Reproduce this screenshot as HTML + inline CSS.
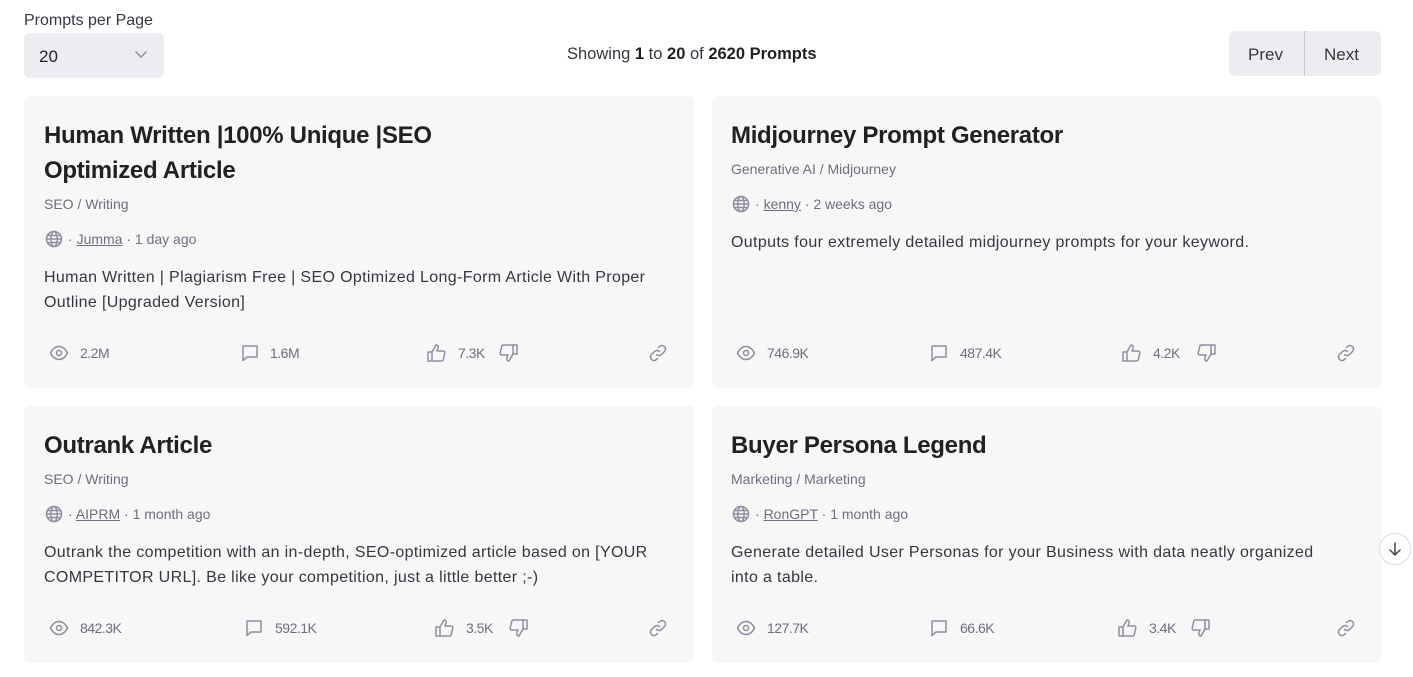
<!DOCTYPE html>
<html><head><meta charset="utf-8"><style>
*{margin:0;padding:0;box-sizing:border-box}
body{width:1413px;height:677px;background:#fff;font-family:"Liberation Sans",sans-serif;color:#202123;position:relative;overflow:hidden}
.a{position:absolute;white-space:nowrap}
.card{position:absolute;background:#f7f7f8;border-radius:6px}
.t{font-size:24px;font-weight:bold;letter-spacing:-0.3px;line-height:35px;color:#202123}
.c{font-size:14px;color:#6e6e80}
.m{font-size:14px;color:#6e6e80}
.m u{color:#6e6e80}
.d{font-size:16px;letter-spacing:0.35px;line-height:25px;color:#353740}
.s{font-size:14px;color:#6e6e80;letter-spacing:-0.5px}
svg{position:absolute;fill:none;stroke:#8e8ea0;stroke-width:1.5;stroke-linecap:round;stroke-linejoin:round}
</style></head><body>
<div class="a" style="left:24px;top:12px;font-size:16px;color:#353740">Prompts per Page</div>
<div class="a" style="left:24px;top:33px;width:140px;height:45px;background:#ececf1;border-radius:6px"></div>
<div class="a" style="left:39px;top:47px;font-size:17px">20</div>
<svg style="left:134px;top:49px" width="14" height="10" viewBox="0 0 14 10"><path d="M2 3l5 5 5-5"/></svg>
<div class="a" style="left:567px;top:45px;font-size:16.5px;color:#353740">Showing <b style="color:#202123">1</b> to <b style="color:#202123">20</b> of <b style="color:#202123">2620 Prompts</b></div>
<div class="a" style="left:1229px;top:31px;width:152px;height:45px;background:#ececf1;border-radius:6px"></div>
<div class="a" style="left:1304px;top:31px;width:1px;height:45px;background:#c5c5d2"></div>
<div class="a" style="left:1248px;top:45px;font-size:17px;color:#353740">Prev</div>
<div class="a" style="left:1324px;top:45px;font-size:17px;color:#353740">Next</div>

<div class="card" style="left:24px;top:96px;width:670px;height:292px"></div>
<div class="card" style="left:712px;top:96px;width:669px;height:292px"></div>
<div class="card" style="left:24px;top:406px;width:670px;height:257px"></div>
<div class="card" style="left:712px;top:406px;width:669px;height:257px"></div>

<div class="a t" style="left:44px;top:118px">Human Written |100% Unique |SEO<br>Optimized Article</div>
<div class="a c" style="left:44px;top:196px">SEO / Writing</div>
<div class="a m" style="left:68px;top:231px">· <u>Jumma</u> · 1 day ago</div>
<div class="a d" style="left:44px;top:265px">Human Written | Plagiarism Free | SEO Optimized Long-Form Article With Proper<br>Outline [Upgraded Version]</div>

<div class="a t" style="left:731px;top:118px">Midjourney Prompt Generator</div>
<div class="a c" style="left:731px;top:161px">Generative AI / Midjourney</div>
<div class="a m" style="left:755px;top:196px">· <u>kenny</u> · 2 weeks ago</div>
<div class="a d" style="left:731px;top:230px">Outputs four extremely detailed midjourney prompts for your keyword.</div>

<div class="a t" style="left:44px;top:428px">Outrank Article</div>
<div class="a c" style="left:44px;top:471px">SEO / Writing</div>
<div class="a m" style="left:68px;top:506px">· <u>AIPRM</u> · 1 month ago</div>
<div class="a d" style="left:44px;top:540px">Outrank the competition with an in-depth, SEO-optimized article based on [YOUR<br>COMPETITOR URL]. Be like your competition, just a little better ;-)</div>

<div class="a t" style="left:731px;top:428px">Buyer Persona Legend</div>
<div class="a c" style="left:731px;top:471px">Marketing / Marketing</div>
<div class="a m" style="left:755px;top:506px">· <u>RonGPT</u> · 1 month ago</div>
<div class="a d" style="left:731px;top:540px">Generate detailed User Personas for your Business with data neatly organized<br>into a table.</div>

<svg style="left:45px;top:230px" width="18" height="18" viewBox="0 0 18 18"><circle cx="9" cy="9" r="7.5"/><ellipse cx="9" cy="9" rx="3.2" ry="7.5"/><path d="M1.5 9h15M2.5 5.5h13M2.5 12.5h13"/></svg>
<svg style="left:732px;top:195px" width="18" height="18" viewBox="0 0 18 18"><circle cx="9" cy="9" r="7.5"/><ellipse cx="9" cy="9" rx="3.2" ry="7.5"/><path d="M1.5 9h15M2.5 5.5h13M2.5 12.5h13"/></svg>
<svg style="left:45px;top:505px" width="18" height="18" viewBox="0 0 18 18"><circle cx="9" cy="9" r="7.5"/><ellipse cx="9" cy="9" rx="3.2" ry="7.5"/><path d="M1.5 9h15M2.5 5.5h13M2.5 12.5h13"/></svg>
<svg style="left:732px;top:505px" width="18" height="18" viewBox="0 0 18 18"><circle cx="9" cy="9" r="7.5"/><ellipse cx="9" cy="9" rx="3.2" ry="7.5"/><path d="M1.5 9h15M2.5 5.5h13M2.5 12.5h13"/></svg>

<svg style="left:49px;top:344px" width="20" height="18" viewBox="0 0 20 18"><path d="M1.5 9C4 4 7 2.5 10 2.5S16 4 18.5 9C16 14 13 15.5 10 15.5S4 14 1.5 9z"/><circle cx="10" cy="9" r="2.5"/></svg>
<div class="a s" style="left:80px;top:345px">2.2M</div>
<svg style="left:240px;top:343px" width="20" height="20" viewBox="0 0 20 20"><path d="M3 3h14v11H7l-4 3.5z"/></svg>
<div class="a s" style="left:270px;top:345px">1.6M</div>
<svg style="left:426px;top:342px" width="22" height="22" viewBox="0 0 22 22"><path d="M6 10v9H2v-9zM6 10l4-7c2 0 2.5 1.5 2 3.5L11 9h6c1.5 0 2 1 1.8 2l-1.5 6.5c-.2.9-1 1.5-2 1.5H6"/></svg>
<div class="a s" style="left:458px;top:345px">7.3K</div>
<svg style="left:497px;top:342px" width="22" height="22" viewBox="0 0 22 22"><path d="M16 12V3h4v9zM16 12l-4 7c-2 0-2.5-1.5-2-3.5L11 13H5c-1.5 0-2-1-1.8-2l1.5-6.5c.2-.9 1-1.5 2-1.5H16"/></svg>
<svg style="left:648px;top:343px" width="20" height="20" viewBox="0 0 20 20"><path d="M8.5 11.5a3.5 3.5 0 0 0 5 0l3-3a3.5 3.5 0 0 0-5-5l-1 1M11.5 8.5a3.5 3.5 0 0 0-5 0l-3 3a3.5 3.5 0 0 0 5 5l1-1"/></svg>

<svg style="left:736px;top:344px" width="20" height="18" viewBox="0 0 20 18"><path d="M1.5 9C4 4 7 2.5 10 2.5S16 4 18.5 9C16 14 13 15.5 10 15.5S4 14 1.5 9z"/><circle cx="10" cy="9" r="2.5"/></svg>
<div class="a s" style="left:767px;top:345px">746.9K</div>
<svg style="left:929px;top:343px" width="20" height="20" viewBox="0 0 20 20"><path d="M3 3h14v11H7l-4 3.5z"/></svg>
<div class="a s" style="left:960px;top:345px">487.4K</div>
<svg style="left:1121px;top:342px" width="22" height="22" viewBox="0 0 22 22"><path d="M6 10v9H2v-9zM6 10l4-7c2 0 2.5 1.5 2 3.5L11 9h6c1.5 0 2 1 1.8 2l-1.5 6.5c-.2.9-1 1.5-2 1.5H6"/></svg>
<div class="a s" style="left:1153px;top:345px">4.2K</div>
<svg style="left:1195px;top:342px" width="22" height="22" viewBox="0 0 22 22"><path d="M16 12V3h4v9zM16 12l-4 7c-2 0-2.5-1.5-2-3.5L11 13H5c-1.5 0-2-1-1.8-2l1.5-6.5c.2-.9 1-1.5 2-1.5H16"/></svg>
<svg style="left:1336px;top:343px" width="20" height="20" viewBox="0 0 20 20"><path d="M8.5 11.5a3.5 3.5 0 0 0 5 0l3-3a3.5 3.5 0 0 0-5-5l-1 1M11.5 8.5a3.5 3.5 0 0 0-5 0l-3 3a3.5 3.5 0 0 0 5 5l1-1"/></svg>

<svg style="left:49px;top:619px" width="20" height="18" viewBox="0 0 20 18"><path d="M1.5 9C4 4 7 2.5 10 2.5S16 4 18.5 9C16 14 13 15.5 10 15.5S4 14 1.5 9z"/><circle cx="10" cy="9" r="2.5"/></svg>
<div class="a s" style="left:80px;top:620px">842.3K</div>
<svg style="left:244px;top:618px" width="20" height="20" viewBox="0 0 20 20"><path d="M3 3h14v11H7l-4 3.5z"/></svg>
<div class="a s" style="left:275px;top:620px">592.1K</div>
<svg style="left:434px;top:617px" width="22" height="22" viewBox="0 0 22 22"><path d="M6 10v9H2v-9zM6 10l4-7c2 0 2.5 1.5 2 3.5L11 9h6c1.5 0 2 1 1.8 2l-1.5 6.5c-.2.9-1 1.5-2 1.5H6"/></svg>
<div class="a s" style="left:466px;top:620px">3.5K</div>
<svg style="left:507px;top:617px" width="22" height="22" viewBox="0 0 22 22"><path d="M16 12V3h4v9zM16 12l-4 7c-2 0-2.5-1.5-2-3.5L11 13H5c-1.5 0-2-1-1.8-2l1.5-6.5c.2-.9 1-1.5 2-1.5H16"/></svg>
<svg style="left:648px;top:618px" width="20" height="20" viewBox="0 0 20 20"><path d="M8.5 11.5a3.5 3.5 0 0 0 5 0l3-3a3.5 3.5 0 0 0-5-5l-1 1M11.5 8.5a3.5 3.5 0 0 0-5 0l-3 3a3.5 3.5 0 0 0 5 5l1-1"/></svg>

<svg style="left:736px;top:619px" width="20" height="18" viewBox="0 0 20 18"><path d="M1.5 9C4 4 7 2.5 10 2.5S16 4 18.5 9C16 14 13 15.5 10 15.5S4 14 1.5 9z"/><circle cx="10" cy="9" r="2.5"/></svg>
<div class="a s" style="left:767px;top:620px">127.7K</div>
<svg style="left:929px;top:618px" width="20" height="20" viewBox="0 0 20 20"><path d="M3 3h14v11H7l-4 3.5z"/></svg>
<div class="a s" style="left:960px;top:620px">66.6K</div>
<svg style="left:1117px;top:617px" width="22" height="22" viewBox="0 0 22 22"><path d="M6 10v9H2v-9zM6 10l4-7c2 0 2.5 1.5 2 3.5L11 9h6c1.5 0 2 1 1.8 2l-1.5 6.5c-.2.9-1 1.5-2 1.5H6"/></svg>
<div class="a s" style="left:1149px;top:620px">3.4K</div>
<svg style="left:1189px;top:617px" width="22" height="22" viewBox="0 0 22 22"><path d="M16 12V3h4v9zM16 12l-4 7c-2 0-2.5-1.5-2-3.5L11 13H5c-1.5 0-2-1-1.8-2l1.5-6.5c.2-.9 1-1.5 2-1.5H16"/></svg>
<svg style="left:1336px;top:618px" width="20" height="20" viewBox="0 0 20 20"><path d="M8.5 11.5a3.5 3.5 0 0 0 5 0l3-3a3.5 3.5 0 0 0-5-5l-1 1M11.5 8.5a3.5 3.5 0 0 0-5 0l-3 3a3.5 3.5 0 0 0 5 5l1-1"/></svg>

<div class="a" style="left:1379px;top:533px;width:32px;height:32px;border:1px solid #d9d9e3;border-radius:50%;background:#fff"></div>
<svg style="left:1387px;top:541px;stroke:#40414f" width="16" height="16" viewBox="0 0 16 16"><path d="M8 2v12M3 9l5 5 5-5"/></svg>
</body></html>
